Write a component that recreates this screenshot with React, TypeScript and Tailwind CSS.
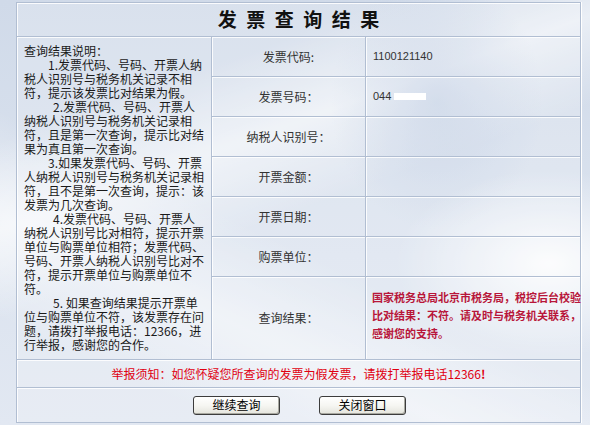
import React from "react";

const leftLines: { t: string; cls: string }[] = [
  { t: "查询结果说明：", cls: "" },
  { t: "1.发票代码、号码、开票人纳", cls: "pl-[24px]" },
  { t: "税人识别号与税务机关记录不相", cls: "" },
  { t: "符，提示该发票比对结果为假。", cls: "" },
  { t: "2.发票代码、号码、开票人", cls: "pl-[29px]" },
  { t: "纳税人识别号与税务机关记录相", cls: "" },
  { t: "符，且是第一次查询，提示比对结", cls: "" },
  { t: "果为真且第一次查询。", cls: "" },
  { t: "3.如果发票代码、号码、开票", cls: "pl-[24px]" },
  { t: "人纳税人识别号与税务机关记录相", cls: "" },
  { t: "符，且不是第一次查询，提示：该", cls: "" },
  { t: "发票为几次查询。", cls: "" },
  { t: "4.发票代码、号码、开票人", cls: "pl-[29px]" },
  { t: "纳税人识别号比对相符，提示开票", cls: "" },
  { t: "单位与购票单位相符；发票代码、", cls: "" },
  { t: "号码、开票人纳税人识别号比对不", cls: "" },
  { t: "符，提示开票单位与购票单位不", cls: "" },
  { t: "符。", cls: "" },
  { t: "5. 如果查询结果提示开票单", cls: "pl-[29px]" },
  { t: "位与购票单位不符，该发票存在问", cls: "" },
  { t: "题，请拨打举报电话：12366，进", cls: "" },
  { t: "行举报，感谢您的合作。", cls: "" },
];

const cell =
  "border-r border-b border-[#b1bed2] shadow-[inset_1px_1px_0_rgba(255,255,255,0.85)]";

function Label({ children }: { children: React.ReactNode }) {
  return (
    <div className={`${cell} flex items-center justify-center text-[12px] text-[#333] whitespace-nowrap`}>
      {children}
    </div>
  );
}

function Value({ children }: { children?: React.ReactNode }) {
  return (
    <div className={`${cell} flex items-center pl-[7px] text-[11px] text-[#333] font-['Liberation_Sans',sans-serif]`}>
      {children}
    </div>
  );
}

function Btn({ children }: { children: React.ReactNode }) {
  return (
    <button className="w-[87px] h-[19px] border border-[#3c3c3c] rounded-[3px] bg-[linear-gradient(180deg,#ffffff_0%,#f6f6f2_50%,#e4e4dc_100%)] shadow-[inset_-1px_-1px_0_#a8a8a0] text-[12px] leading-none text-black flex items-center justify-center font-['Noto_Sans_CJK_SC',sans-serif]">
      {children}
    </button>
  );
}

export default function App() {
  return (
    <div className="w-[590px] h-[425px] overflow-hidden pt-[2px] pl-[16px] font-['Noto_Sans_CJK_SC','Liberation_Sans',sans-serif] bg-[radial-gradient(ellipse_26%_22%_at_93%_62%,rgba(255,255,255,0.9)_0%,rgba(255,255,255,0)_100%),radial-gradient(ellipse_18%_30%_at_74%_24%,rgba(180,196,222,0.55)_0%,rgba(180,196,222,0)_100%),linear-gradient(160deg,rgba(255,255,255,0)_22%,rgba(255,255,255,0.55)_36%,rgba(255,255,255,0)_50%),linear-gradient(205deg,rgba(255,255,255,0)_55%,rgba(255,255,255,0.45)_70%,rgba(255,255,255,0)_85%),linear-gradient(180deg,#d0dae9_0%,#dbe3ef_60%,#e2e8f2_100%)]">
      <div className="w-[565px] grid grid-cols-[195px_154px_215px] grid-rows-[34px_40px_40px_40px_40px_40px_40px_83px_28px_35px] border-l border-t border-[#b1bed2] shadow-[1px_0_0_#ffffff] bg-[rgba(255,255,255,0.2)]">
        {/* title */}
        <div className={`${cell} col-span-3 flex items-center justify-center pb-[3px]`}>
          <span className="text-[19px] font-bold tracking-[9.5px] pl-[9.5px] text-[#111] leading-none">
            发票查询结果
          </span>
        </div>

        {/* left explanation */}
        <div className={`${cell} row-span-7 pl-[7px] pt-[7px] text-[12px] leading-[14px] text-[#1a1a1a]`}>
          {leftLines.map((l, i) => (
            <div key={i} className={`whitespace-nowrap ${l.cls}`}>
              {l.t}
            </div>
          ))}
        </div>

        <Label>发票代码:</Label>
        <Value>1100121140</Value>

        <Label>发票号码：</Label>
        <Value>
          <span>044</span>
          <span className="ml-[3px] w-[32px] h-[7px] bg-white inline-block"></span>
        </Value>

        <Label>纳税人识别号：</Label>
        <Value />

        <Label>开票金额：</Label>
        <Value />

        <Label>开票日期：</Label>
        <Value />

        <Label>购票单位：</Label>
        <Value />

        <Label>查询结果：</Label>
        <div className={`${cell} flex flex-col justify-center pl-[6px] pb-[6px] text-[11px] leading-[18px] font-bold text-[#b8163a] whitespace-nowrap`}>
          <div>国家税务总局北京市税务局，税控后台校验</div>
          <div>比对结果：不符。请及时与税务机关联系，</div>
          <div>感谢您的支持。</div>
        </div>

        {/* notice */}
        <div className={`${cell} col-span-3 flex items-center justify-center text-[12px] text-[#e00010] whitespace-nowrap`}>
          举报须知：如您怀疑您所查询的发票为假发票，请拨打举报电话12366<span className="font-bold">!</span>
        </div>

        {/* buttons */}
        <div className={`${cell} col-span-3 flex items-center justify-center gap-[39px] pl-[2px]`}>
          <Btn>继续查询</Btn>
          <Btn>关闭窗口</Btn>
        </div>
      </div>
    </div>
  );
}
